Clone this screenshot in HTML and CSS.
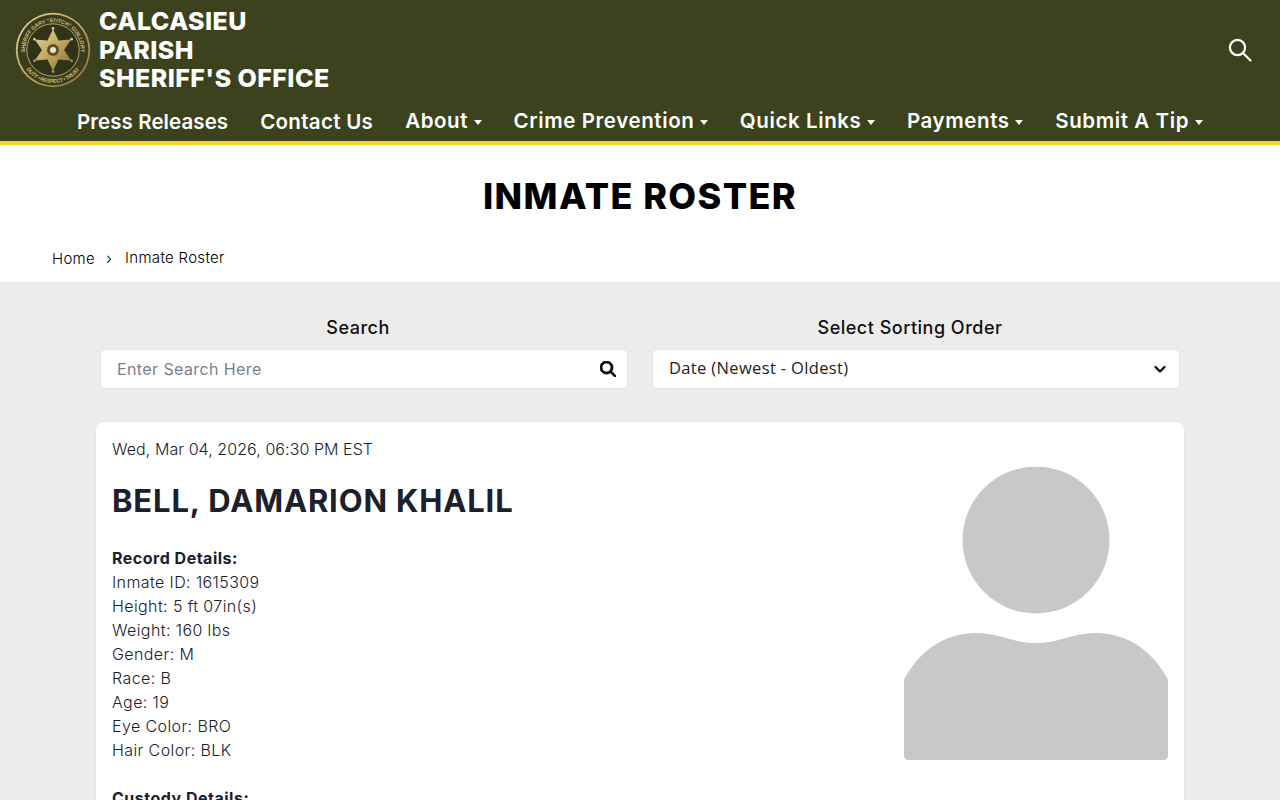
FILE: index.html
```html
<!DOCTYPE html>
<html lang="en">
<head>
    <meta charset="UTF-8">
    <meta name="viewport" content="width=device-width, initial-scale=1.0">
    <title>Inmate Roster</title>
    <link rel="stylesheet" href="styles.css">
</head>
<body>
    <!-- Header -->
    <header class="site-header">
        <div class="brand-row">
            <a class="brand" href="#">
                <svg class="seal" viewBox="0 0 76 76" aria-hidden="true">
                    <defs>
                        <path id="ring-top" d="M10.4 42.9A28 28 0 1 1 65.6 42.9"/>
                        <path id="ring-bottom" d="M8.1 51.9A33 33 0 0 0 67.9 51.9"/>
                        <linearGradient id="gold" x1="0" y1="0" x2="1" y2="1">
                            <stop offset="0" stop-color="#e6d496"/>
                            <stop offset="0.55" stop-color="#bda25c"/>
                            <stop offset="1" stop-color="#7f6c36"/>
                        </linearGradient>
                    </defs>
                    <circle cx="38" cy="38" r="37.2" fill="url(#gold)"/>
                    <circle cx="38" cy="38" r="35.4" fill="#3a3e1f"/>
                    <circle cx="38" cy="38" r="26.2" fill="#2f3319" stroke="#b9a25c" stroke-width="1"/>
                    <text class="seal-text"><textPath href="#ring-top" startOffset="50%" text-anchor="middle" textLength="92">SHERIFF GARY "STITCH" GUILLORY</textPath></text>
                    <text class="seal-text"><textPath href="#ring-bottom" startOffset="50%" text-anchor="middle" textLength="62">DUTY • RESPECT • TRUST</textPath></text>
                    <path d="M38 17L43.5 28.5 56.2 27.5 49 38 56.2 48.5 43.5 47.5 38 59 32.5 47.5 19.8 48.5 27 38 19.8 27.5 32.5 28.5Z" fill="url(#gold)"/>
                    <circle cx="38" cy="16.5" r="1.4" fill="#d9c483"/>
                    <circle cx="56.6" cy="27.2" r="1.4" fill="#d9c483"/>
                    <circle cx="56.6" cy="48.8" r="1.4" fill="#a8914f"/>
                    <circle cx="38" cy="59.5" r="1.4" fill="#a8914f"/>
                    <circle cx="19.4" cy="48.8" r="1.4" fill="#a8914f"/>
                    <circle cx="19.4" cy="27.2" r="1.4" fill="#d9c483"/>
                    <circle cx="38" cy="38" r="6" fill="#5d4f27"/>
                    <circle cx="38" cy="38" r="3" fill="#efe6c8"/>
                </svg>
                <span class="brand-name">CALCASIEU<br>PARISH<br>SHERIFF'S OFFICE</span>
            </a>
            <a class="header-search" href="#" aria-label="Search">
                <svg viewBox="0 0 24 24" width="24" height="24" fill="none" stroke="#fff" stroke-width="2.2" stroke-linecap="round">
                    <circle cx="9.5" cy="9.5" r="7.6"/>
                    <path d="M15 15l7.5 7.5"/>
                </svg>
            </a>
        </div>
        <nav class="main-nav">
            <a href="#" class="plain">Press Releases</a>
            <a href="#" class="plain">Contact Us</a>
            <a href="#">About</a>
            <a href="#">Crime Prevention</a>
            <a href="#">Quick Links</a>
            <a href="#">Payments</a>
            <a href="#">Submit A Tip</a>
        </nav>
    </header>

    <!-- Page title -->
    <section class="page-title">
        <h1>INMATE ROSTER</h1>
        <div class="breadcrumb">
            <a href="#">Home</a>
            <span class="crumb-sep">›</span>
            <span class="crumb-current">Inmate Roster</span>
        </div>
    </section>

    <main class="roster">
        <!-- Search and sort -->
        <div class="filters">
            <div class="filter">
                <label for="search">Search</label>
                <div class="field">
                    <input type="text" id="search" placeholder="Enter Search Here">
                    <svg viewBox="0 0 512 512" width="16" height="16" aria-hidden="true"><path fill="#0b0b0b" stroke="#0b0b0b" stroke-width="28" d="M416 208c0 45.9-14.9 88.3-40 122.7L502.6 457.4c12.5 12.5 12.5 32.8 0 45.3s-32.8 12.5-45.3 0L330.7 376c-34.4 25.2-76.8 40-122.7 40C93.1 416 0 322.9 0 208S93.1 0 208 0S416 93.1 416 208zM208 352a144 144 0 1 0 0-288 144 144 0 1 0 0 288z"/></svg>
                </div>
            </div>
            <div class="filter">
                <label>Select Sorting Order</label>
                <div class="field">
                    <span class="select-value">Date (Newest - Oldest)</span>
                    <svg viewBox="0 0 16 16" width="16" height="16" fill="none" stroke="#111" stroke-width="2.4" stroke-linecap="round" stroke-linejoin="round" aria-hidden="true"><path d="M3.5 6l4.5 4.5 4.5-4.5"/></svg>
                </div>
            </div>
        </div>

        <!-- Inmate record -->
        <article class="record">
            <div class="record-info">
                <p class="record-date">Wed, Mar 04, 2026, 06:30 PM EST</p>
                <h2>BELL, DAMARION KHALIL</h2>
                <p class="details">
                    <strong>Record Details:</strong><br>
                    Inmate ID: 1615309<br>
                    Height: 5 ft 07in(s)<br>
                    Weight: 160 lbs<br>
                    Gender: M<br>
                    Race: B<br>
                    Age: 19<br>
                    Eye Color: BRO<br>
                    Hair Color: BLK
                </p>
                <p class="details">
                    <strong>Custody Details:</strong>
                </p>
            </div>
            <svg class="no-photo" viewBox="0 0 264 296" aria-hidden="true">
                <circle cx="132" cy="73" r="73.5"/>
                <path d="M0 213C14 185 40 166 72 166C96 166 108 176 132 176C156 176 168 166 192 166C224 166 250 185 264 213V288Q264 293 259 293H5Q0 293 0 288Z"/>
            </svg>
        </article>
    </main>
</body>
</html>
```

FILE: styles.css
```css
html, body {
    height: 100%;
}
body {
    margin: 0;
    height: 100vh;
    overflow: hidden;
    background-color: #ececec;
    color: #1a202c;
    font-family: Inter, "Open Sans", sans-serif;
}
a {
    color: inherit;
    text-decoration: none;
}

/* Header */
.site-header {
    height: 141px;
    background-color: #3c421e;
    border-bottom: 4px solid #f6d32d;
    color: #fff;
}
.brand-row {
    display: flex;
    justify-content: space-between;
    align-items: center;
    height: 100px;
    padding: 0 28px 0 15px;
}
.brand {
    display: flex;
    align-items: center;
    gap: 8px;
}
.seal {
    width: 76px;
    height: 76px;
    flex-shrink: 0;
}
.seal-text {
    font-family: "Liberation Sans", sans-serif;
    font-size: 5.4px;
    font-weight: 700;
    fill: #d3bc72;
}
.brand-name {
    font-size: 25px;
    font-weight: 800;
    line-height: 28.5px;
    letter-spacing: 0.42px;
}
.header-search {
    display: flex;
}
.main-nav {
    display: flex;
    gap: 32px;
    padding-left: 77px;
    font-size: 20.5px;
    font-weight: 600;
    line-height: 42px;
    letter-spacing: 0.6px;
}
.main-nav a.plain {
    padding-top: 1px;
    letter-spacing: 0.08px;
}
.main-nav a.plain + a.plain {
    letter-spacing: 0.3px;
}
.main-nav a:not(.plain)::after {
    content: "";
    display: inline-block;
    margin-left: 5.5px;
    vertical-align: 3px;
    border-left: 4px solid transparent;
    border-right: 4px solid transparent;
    border-top: 5px solid #fff;
}

/* Page title */
.page-title {
    height: 137px;
    background-color: #fff;
    color: #000;
}
.page-title h1 {
    margin: 0;
    padding-top: 30px;
    font-size: 36px;
    font-weight: 800;
    line-height: 42px;
    letter-spacing: 1.4px;
    text-align: center;
}
.breadcrumb {
    display: flex;
    align-items: center;
    padding: 30px 0 0 52px;
    font-size: 15px;
    font-weight: 350;
    line-height: 20px;
    letter-spacing: 0.3px;
}
.breadcrumb a {
    padding-top: 2px;
}
.crumb-sep {
    margin: 0 13px 0 11px;
    font-size: 16px;
}

/* Search and sort */
.roster {
    padding: 34px 95px 0;
}
.filters {
    display: flex;
    gap: 24px;
    padding: 0 5px;
}
.filter {
    flex: 1;
}
.filter label {
    display: block;
    margin-bottom: 9px;
    padding-right: 12px;
    font-size: 18px;
    font-weight: 500;
    line-height: 24px;
    letter-spacing: 0.5px;
    text-align: center;
    color: #111;
}
.field {
    display: flex;
    justify-content: space-between;
    align-items: center;
    height: 38px;
    padding: 0 11px 0 16px;
    background-color: #fff;
    border: 1px solid #e4e4e4;
    border-radius: 5px;
}
.field input {
    flex: 1;
    border: none;
    outline: none;
    padding: 0;
    font-family: inherit;
    font-size: 16px;
    letter-spacing: 0.4px;
}
.field input::placeholder {
    color: #7a7f8c;
}
.select-value {
    margin-top: -4px;
    font-family: "Open Sans", sans-serif;
    font-size: 16.5px;
    letter-spacing: 0.35px;
    color: #222;
}

/* Inmate record */
.record {
    display: flex;
    justify-content: space-between;
    margin-top: 32px;
    padding: 15px 16px 16px;
    height: 600px;
    background-color: #fff;
    border: 1px solid #e6e6e6;
    border-radius: 9px;
    box-sizing: border-box;
}
.record-date {
    margin: 0;
    font-size: 16px;
    font-weight: 300;
    line-height: 24px;
    letter-spacing: 0.07px;
}
.record h2 {
    margin: 22px 0 27px;
    font-size: 31px;
    font-weight: 700;
    line-height: 36px;
    letter-spacing: 0.85px;
}
.details {
    margin: 0 0 24px;
    font-size: 16px;
    font-weight: 350;
    line-height: 24px;
    letter-spacing: 0.4px;
}
.details strong {
    font-weight: 700;
    letter-spacing: 0.5px;
}
.no-photo {
    width: 264px;
    height: 296px;
    margin-top: 30px;
    fill: #c8c8c8;
    filter: blur(0.4px);
}
```
